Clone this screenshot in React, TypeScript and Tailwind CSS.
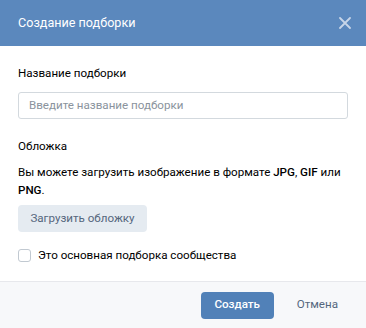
export default function App() {
  return (
    <div
      className="w-[366px] h-[328px] bg-white flex flex-col text-[11.6px] text-black"
      style={{ fontFamily: "Roboto, 'Open Sans', sans-serif" }}>
      <div className="h-[46px] bg-[#5b88bd] flex items-center justify-between pl-[18px] pr-[15px]">
        <span className="text-white text-[12.6px]">Создание подборки</span>
        <svg width="12" height="12" viewBox="0 0 12 12" className="text-[#c7d5e8]">
          <path
            d="M1 1l10 10M11 1L1 11"
            stroke="currentColor"
            strokeWidth={1.8}
            strokeLinecap="round"
          />
        </svg>
      </div>

      <div className="flex-1 px-[18px] pt-[19px]">
        <div className="leading-[16px]">Название подборки</div>
        <div className="mt-[11px] h-[27px] border border-[#d3d9de] rounded-[3px] flex items-center px-[10px] text-[#8a939d]">
          Введите название подборки
        </div>
        <div className="mt-[19px] leading-[16px]">Обложка</div>
        <p className="mt-[9px] leading-[18px]">
          Вы можете загрузить изображение в формате <b className="font-medium">JPG</b>,{" "}
          <b className="font-medium">GIF</b> или <b className="font-medium">PNG</b>.
        </p>
        <button className="mt-[6px] h-[27px] w-[129px] bg-[#e5ebf1] rounded-[4px] text-[#55677d]">
          Загрузить обложку
        </button>
        <label className="mt-[15px] flex items-center gap-[7px]">
          <span className="w-[13px] h-[13px] border border-[#c1c9d1] rounded-[3px] bg-white" />
          <span>Это основная подборка сообщества</span>
        </label>
      </div>

      <div className="h-[47px] bg-[#f7f8fa] border-t border-[#e7e8ec] flex items-center justify-end pr-[28px] gap-[23px]">
        <button className="h-[27px] w-[73px] bg-[#5181b8] rounded-[4px] text-white font-medium">
          Создать
        </button>
        <span className="text-[#55677d]">Отмена</span>
      </div>
    </div>
  );
}
